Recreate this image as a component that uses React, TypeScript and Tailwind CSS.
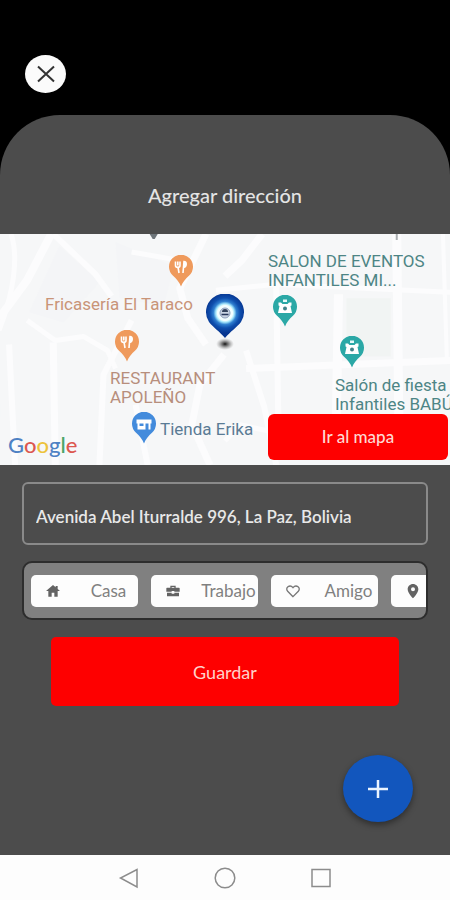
import React from 'react';

const roads: { d: string; w: number }[] = [
  { d: 'M52 0 L28 46 L0 84', w: 8 },
  { d: 'M12 0 C20 24 14 60 0 96', w: 5 },
  { d: 'M54 0 L96 40 L112 62', w: 6 },
  { d: 'M28 86 L56 106 L84 102 L108 116 L116 134', w: 5 },
  { d: 'M10 110 L16 230', w: 6 },
  { d: 'M54 108 L56 230', w: 7 },
  { d: 'M100 230 L104 140 L132 86', w: 6 },
  { d: 'M132 18 L178 26', w: 5 },
  { d: 'M206 0 L180 54 L188 84 L206 110', w: 7 },
  { d: 'M225 42 L242 26 L262 0', w: 7 },
  { d: 'M216 56 L276 50 L450 58', w: 5 },
  { d: 'M246 116 L264 172 L276 230', w: 6 },
  { d: 'M224 120 L200 150 L192 190 L210 230', w: 7 },
  { d: 'M276 50 L278 180', w: 6 },
  { d: 'M338 60 L336 180', w: 9 },
  { d: 'M396 0 L398 180', w: 9 },
  { d: 'M246 134 L450 126', w: 7 },
  { d: 'M225 206 L240 190 L268 196', w: 5 },
  { d: 'M136 170 L148 230', w: 6 },
  { d: 'M442 0 L446 128', w: 4 },
];

function MapTerrain() {
  return (
    <svg className="absolute inset-0 h-full w-full" viewBox="0 0 450 230" preserveAspectRatio="xMidYMid slice" aria-hidden="true">
      <rect width="450" height="230" fill="#f6f7f8" />
      <path d="M346 64h44v58h-44z" fill="#f1f4f3" />
      <path d="M60 12l40 36-36 40-34-10zM116 8l58 24-10 40-44-8z" fill="#f4f5f7" />
      {roads.map((r) => (
        <path key={r.d} d={r.d} fill="none" stroke="#fcfcfd" strokeWidth={r.w} strokeLinejoin="round" />
      ))}
      <path d="M150 0h8l-3 5h-2z" fill="#6d7479" />
      <path d="M396 0v6" stroke="#a9adb0" strokeWidth="2" />
      <path d="M0 169v14" stroke="#d8f3e0" strokeWidth="2" />
    </svg>
  );
}

type Kind = 'food' | 'event' | 'shop';

function Pin({ kind, place }: { kind: Kind; place: string }) {
  const color = { food: '#ef9a5c', event: '#2ba8a6', shop: '#438bdc' }[kind];
  return (
    <svg className={`absolute h-8 w-6 ${place}`} viewBox="0 0 24 32" aria-hidden="true">
      <path d="M12 31.500 C10.500 27 7.500 24 3.800 20.500 A12 12 0 1 1 20.200 20.500 C16.500 24 13.500 27 12 31.500Z" fill={color} />
      {kind === 'food' && (
        <g stroke="#fff" fill="none" strokeWidth="1.600">
          <path d="M6.500 6.500v4c0 2.500 4.500 2.500 4.500 0v-4M8.800 6.500v4" />
          <path d="M9 12l1 6" />
          <path d="M14 18l1-11.500c3 0 3 5-0.500 6" fill="#fff" />
        </g>
      )}
      {kind === 'event' && (
        <g>
          <path d="M10 4.500h4V7h-4z" fill="#e6fafa" />
          <path d="M5.500 7.500h2.500l1.500 1.500h5l1.500-1.500h2.500v3L17.500 11l1.500 7H5l1.500-7-1-0.500z" fill="#fff" />
          <circle cx="12" cy="13.500" r="2" fill="#43828a" />
        </g>
      )}
      {kind === 'shop' && (
        <g>
          <path d="M4.500 7.500h15v4h-15z" fill="#fff" />
          <path d="M5.500 11h8v6.500h-8zM16.500 11h2v6.500h-2z" fill="#fff" />
          <path d="M7.500 11.500h4v2.500h-4z" fill={color} />
        </g>
      )}
    </svg>
  );
}

function CurrentMarker() {
  return (
    <svg className="absolute left-[205px] top-[60px] h-[60px] w-10" viewBox="0 0 40 60" aria-label="Ubicación seleccionada" role="img">
      <defs>
        <radialGradient id="eye" cx="20" cy="19" r="20" gradientUnits="userSpaceOnUse">
          <stop offset="0.380" stopColor="#f2feff" />
          <stop offset="0.460" stopColor="#a5e6fb" />
          <stop offset="0.580" stopColor="#2f7fd0" />
          <stop offset="0.750" stopColor="#0f4fae" />
          <stop offset="1" stopColor="#063590" />
        </radialGradient>
        <radialGradient id="shade">
          <stop offset="0" stopColor="#111" />
          <stop offset="0.400" stopColor="#555" stopOpacity="0.700" />
          <stop offset="1" stopColor="#999" stopOpacity="0" />
        </radialGradient>
      </defs>
      <ellipse cx="20" cy="50" rx="9" ry="6" fill="url(#shade)" />
      <path d="M20 44 C15 38 8 33 4 28 A19 18.500 0 1 1 36 28 C32 33 25 38 20 44Z" fill="url(#eye)" />
      <circle cx="20" cy="19" r="5" fill="#c9d3e2" stroke="#8e9fbd" strokeWidth="1" />
      <path d="M17 18a3 3 0 0 1 6 0z" fill="#34435c" />
      <path d="M16.500 20.500h7" stroke="#26375a" strokeWidth="1.500" />
    </svg>
  );
}

const labelBase = 'absolute whitespace-nowrap text-[17px] leading-[19px]';

function MapView() {
  return (
    <section aria-label="Mapa" className="relative h-[231px] overflow-hidden bg-[#f6f7f8] font-['Roboto',sans-serif]">
      <MapTerrain />
      <Pin kind="food" place="left-[169px] top-[21px]" />
      <Pin kind="food" place="left-[115px] top-[96px]" />
      <Pin kind="event" place="left-[273px] top-[61px]" />
      <Pin kind="event" place="left-[340px] top-[102px]" />
      <Pin kind="shop" place="left-[132px] top-[178px]" />
      <p className={`${labelBase} left-[45px] top-[61px] text-[#c99478]`}>Fricasería El Taraco</p>
      <p className={`${labelBase} left-[110px] top-[135px] text-[#b78e7c]`}>
        RESTAURANT
        <br />
        APOLEÑO
      </p>
      <p className={`${labelBase} left-[268px] top-[18px] text-[#4d8585]`}>
        SALON DE EVENTOS
        <br />
        INFANTILES MI...
      </p>
      <p className={`${labelBase} left-[335px] top-[142px] text-[#4d8585]`}>
        Salón de fiesta
        <br />
        Infantiles BABÚ
      </p>
      <p className={`${labelBase} left-[160px] top-[186px] text-[#5a7b95]`}>Tienda Erika</p>
      <CurrentMarker />
      <p className="absolute bottom-1.5 left-2 font-['Lato',sans-serif] text-[22px] font-medium leading-7 text-[#4f82c4]" aria-label="Google">
        <span>G</span>
        <span className="text-[#dc5750]">o</span>
        <span className="text-[#edc33c]">o</span>
        <span>g</span>
        <span className="text-[#4ba567]">l</span>
        <span className="text-[#dc5750]">e</span>
      </p>
      <button className="absolute bottom-[5px] right-0.5 h-[46px] w-[180px] rounded-md bg-[#fe0000] font-['Lato',sans-serif] text-[17px] font-medium text-[#ffd9d3]">
        Ir al mapa
      </button>
    </section>
  );
}

const iconPaths = {
  home: 'M12 3 1.500 12H5v8.500h5v-6h4v6h5V12h3.500L19 9V4.500h-3v2z',
  work: 'M8 7V4h8v3h5a1 1 0 0 1 1 1v5h-8v-1h-4v1H2V8a1 1 0 0 1 1-1zM10 7h4V6h-4zM3 14.500h7V16h4v-1.500h7V20H3z',
  heart: 'M12 20.500 4 12.500C-.5 7.500 7 1 12 7c5-6 12.500.5 8 5.500z',
  place: 'M12 1.500c-4.500 0-8 3.500-8 8 0 6 8 13.500 8 13.500s8-7.500 8-13.500c0-4.500-3.500-8-8-8zm0 5a3 3 0 1 1 0 6 3 3 0 0 1 0-6z',
};

function Chip({ icon, label }: { icon: keyof typeof iconPaths; label: string }) {
  const outlined = icon === 'heart';
  return (
    <button
      aria-label={label ? undefined : 'Otro lugar'}
      className="flex h-8 w-[107px] shrink-0 items-center rounded-[5px] bg-[#fdfdfd] pl-[14px] text-[17px] text-[#808080]"
    >
      <svg className="h-4 w-4 shrink-0" viewBox="0 0 24 24" aria-hidden="true">
        <path
          d={iconPaths[icon]}
          fill={outlined ? 'none' : '#636363'}
          stroke={outlined ? '#777' : 'none'}
          strokeWidth="2"
          fillRule="evenodd"
        />
      </svg>
      <span className="flex-1 whitespace-nowrap pl-[18px] text-center">{label}</span>
    </button>
  );
}

function SystemBar() {
  const shape = 'h-6 w-6 fill-none stroke-[#8c8c8c]';
  return (
    <nav aria-label="Sistema" className="flex h-[45px] items-center justify-center gap-[72px] bg-[#fdfdfd]">
      <button aria-label="Atrás">
        <svg className={shape} viewBox="0 0 24 24" strokeWidth="1.500"><path d="M20 3.500v17.500L3.500 12z" /></svg>
      </button>
      <button aria-label="Inicio">
        <svg className={shape} viewBox="0 0 24 24" strokeWidth="1.500"><circle cx="12" cy="12" r="9.800" /></svg>
      </button>
      <button aria-label="Recientes">
        <svg className={shape} viewBox="0 0 24 24" strokeWidth="1.500"><rect x="3" y="3.500" width="18" height="17" /></svg>
      </button>
    </nav>
  );
}

export default function App() {
  return (
    <div className="flex min-h-screen flex-col bg-black font-['Lato',sans-serif]">
      <header className="h-[115px] pl-[25px] pt-[55px]">
        <button aria-label="Cerrar" className="flex h-[38px] w-[41px] items-center justify-center rounded-[50%] bg-[#fbfbfb]">
          <svg className="h-[18px] w-[18px]" viewBox="0 0 18 18" aria-hidden="true">
            <path d="M1 1.500l16 15M17 1.500l-16 15" stroke="#333" strokeWidth="2" />
          </svg>
        </button>
      </header>

      <main className="flex flex-1 flex-col rounded-t-[60px] bg-[#4c4c4c]">
        <h1 className="pb-[25px] pt-[66px] text-center text-xl font-medium leading-7 text-[#e4e4e4]">Agregar dirección</h1>
        <MapView />
        <div className="px-[22px] pt-[17px]">
          <input
            aria-label="Dirección"
            defaultValue="Avenida Abel Iturralde 996, La Paz, Bolivia"
            className="h-[63px] w-full rounded-md border-2 border-[#8a8a8a] bg-transparent px-3 pt-1.5 text-[17px] font-semibold text-[#e8e8e8] outline-none"
          />
          <div className="mt-4 flex h-[59px] items-center gap-[13px] overflow-hidden rounded-[10px] border-2 border-[#2d2d2d] bg-[#808080] pl-[7px]">
            <Chip icon="home" label="Casa" />
            <Chip icon="work" label="Trabajo" />
            <Chip icon="heart" label="Amigo" />
            <Chip icon="place" label="" />
          </div>
        </div>
        <button className="mx-[51px] mt-[17px] h-[69px] rounded-[5px] bg-[#fe0000] text-lg text-[#ffd2ca]">Guardar</button>
        <button
          aria-label="Añadir"
          className="mb-[33px] mr-[37px] mt-auto flex h-[67px] w-[70px] items-center justify-center self-end rounded-[50%] bg-[#1256bd] shadow-[0_3px_6px_rgba(0,0,0,0.4)]"
        >
          <svg className="h-5 w-5" viewBox="0 0 20 20" aria-hidden="true">
            <path d="M10 1v18M0 10h20" stroke="#eaf4ff" strokeWidth="2.500" />
          </svg>
        </button>
      </main>
      <SystemBar />
    </div>
  );
}
